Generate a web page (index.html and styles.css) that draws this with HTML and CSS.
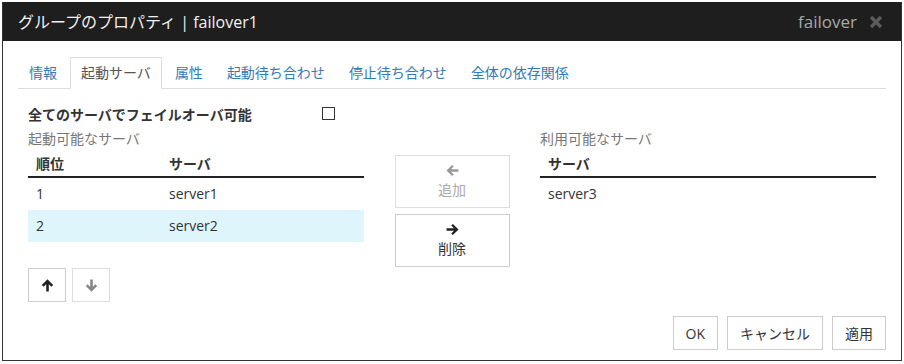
FILE: index.html
```html
<!DOCTYPE html>
<html>
<head>
<meta charset="UTF-8">
<link rel="stylesheet" href="styles.css">
</head>
<body>
<div class="dialog">
  <div class="dlg-head">
    <span class="title">グループのプロパティ | failover1</span>
    <span class="head-right">
      <span class="grp">failover</span>
      <svg class="close" width="14" height="14" viewBox="0 0 14 14"><path d="M2 2L12 12M12 2L2 12" stroke="#5c5c5c" stroke-width="3.2" fill="none"/></svg>
    </span>
  </div>

  <div class="dlg-body">
    <ul class="tabs">
      <li><a>情報</a></li>
      <li class="active"><a>起動サーバ</a></li>
      <li><a>属性</a></li>
      <li><a>起動待ち合わせ</a></li>
      <li><a>停止待ち合わせ</a></li>
      <li><a>全体の依存関係</a></li>
    </ul>

    <div class="pane">
      <div class="opt-row">
        <label class="opt-label">全てのサーバでフェイルオーバ可能</label>
        <span class="checkbox"></span>
      </div>

      <div class="lists">
        <div class="list-col">
          <div class="caption">起動可能なサーバ</div>
          <table class="grid">
            <tr><th class="c-order">順位</th><th>サーバ</th></tr>
            <tr><td class="c-order">1</td><td>server1</td></tr>
            <tr class="sel"><td class="c-order">2</td><td>server2</td></tr>
          </table>
          <div class="updown">
            <button class="sq">
              <svg width="13" height="13" viewBox="0 0 12 12"><path d="M6 11.5V2M1.6 6.4L6 2l4.4 4.4" stroke="#222" stroke-width="2.4" fill="none"/></svg>
            </button>
            <button class="sq off">
              <svg width="13" height="13" viewBox="0 0 12 12"><path d="M6 0.5V10M1.6 5.6L6 10l4.4-4.4" stroke="#888" stroke-width="2.4" fill="none"/></svg>
            </button>
          </div>
        </div>

        <div class="mid-col">
          <button class="move off">
            <svg width="13" height="13" viewBox="0 0 12 12"><path d="M11.5 6H2M6.4 1.6L2 6l4.4 4.4" stroke="#999" stroke-width="2.2" fill="none"/></svg>
            <span>追加</span>
          </button>
          <button class="move">
            <svg width="13" height="13" viewBox="0 0 12 12"><path d="M0.5 6H10M5.6 1.6L10 6l-4.4 4.4" stroke="#222" stroke-width="2.2" fill="none"/></svg>
            <span>削除</span>
          </button>
        </div>

        <div class="list-col">
          <div class="caption">利用可能なサーバ</div>
          <table class="grid">
            <tr><th>サーバ</th></tr>
            <tr><td>server3</td></tr>
          </table>
        </div>
      </div>
    </div>

    <div class="footer">
      <button class="btn">OK</button>
      <button class="btn">キャンセル</button>
      <button class="btn">適用</button>
    </div>
  </div>
</div>
</body>
</html>
```

FILE: styles.css
```css
body {
  margin: 0;
  background: #fff;
  font-family: "Open Sans", "Noto Sans CJK JP", sans-serif;
  font-size: 14px;
  line-height: 20px;
  color: #333;
}

/* dialog frame */
.dialog {
  margin: 2px;
  width: 898px;
  height: 358px;
  border: 1px solid #333;
  border-top: none;
  display: flex;
  flex-direction: column;
}

.dlg-head {
  background: #1e1e1e;
  height: 39px;
  display: flex;
  align-items: center;
  justify-content: space-between;
  padding: 0 18px 0 15px;
}

.title {
  color: #f2f2f2;
  font-size: 16px;
}

.head-right {
  display: flex;
  align-items: center;
  gap: 12px;
}

.grp {
  color: #a8a8a8;
  font-size: 17px;
}

.close {
  display: block;
}

.dlg-body {
  flex: 1;
  padding: 16px 15px 0 15px;
  display: flex;
  flex-direction: column;
}

/* tabs */
.tabs {
  list-style: none;
  margin: 0;
  padding: 0;
  display: flex;
  border-bottom: 1px solid #ddd;
}

.tabs li {
  margin-right: 2px;
  margin-bottom: -1px;
}

.tabs a {
  display: block;
  padding: 5px 10px;
  border: 1px solid transparent;
  color: #337ab7;
}

.tabs .active a {
  color: #555;
  background: #fff;
  border-color: #ddd #ddd transparent #ddd;
}

/* tab content */
.pane {
  padding: 0 10px;
}

.opt-row {
  display: flex;
  align-items: center;
  margin-top: 16px;
  font-weight: bold;
}

.opt-label {
  width: 294px;
}

.checkbox {
  width: 11px;
  height: 11px;
  border: 1px solid #333;
  margin-top: -3px;
}

.lists {
  display: flex;
  justify-content: space-between;
  margin-top: 4px;
}

.list-col {
  width: 336px;
}

.caption {
  color: #777;
}

.grid {
  width: 100%;
  border-collapse: collapse;
}

.grid th {
  text-align: left;
  padding: 5px 8px 2px 8px;
  border-bottom: 2px solid #222;
}

.grid td {
  padding: 6px 8px;
}

.grid .c-order {
  width: 117px;
}

.grid .sel td {
  background: #dff5fc;
}

.updown {
  display: flex;
  gap: 6px;
  margin-top: 26px;
}

button {
  font-family: inherit;
  font-size: 14px;
  background: #fff;
  border: 1px solid #ccc;
  color: #333;
  cursor: pointer;
}

.sq {
  width: 38px;
  height: 34px;
  display: flex;
  align-items: center;
  justify-content: center;
  padding: 0;
}

.sq.off {
  border-color: #ddd;
}

.mid-col {
  display: flex;
  flex-direction: column;
  gap: 6px;
  margin-top: 26px;
}

.move {
  width: 115px;
  height: 53px;
  display: flex;
  flex-direction: column;
  align-items: center;
  justify-content: center;
  gap: 3px;
  padding: 0;
  line-height: 20px;
}

.move svg {
  display: block;
}

.move.off {
  color: #aaa;
  border-color: #ddd;
}

.footer {
  display: flex;
  justify-content: flex-end;
  gap: 9px;
  margin-top: auto;
  margin-bottom: 10px;
}

.btn {
  height: 34px;
  padding: 0 12px;
}
```
